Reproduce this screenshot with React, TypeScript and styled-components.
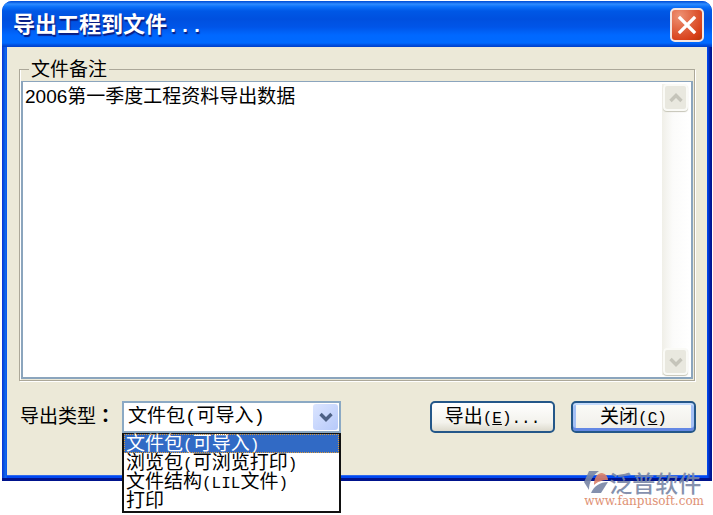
import React, { useState } from "react";
import styled, { createGlobalStyle, css } from "styled-components";

const GlobalStyle = createGlobalStyle`
  *, *::before, *::after { box-sizing: border-box; }
  body { margin: 0; background: #fff; }
  body, button, select, textarea {
    font-family: "Liberation Sans", "Noto Sans CJK SC", sans-serif;
    font-size: 19px;
    color: #000;
  }
`;

const Page = styled.main`
  position: relative;
  display: flex;
  flex-direction: column;
  min-height: 100vh;
  padding: 1px 1px 34px 2px;
`;

const Dialog = styled.section`
  flex: 1;
  display: flex;
  flex-direction: column;
  border-radius: 10px 10px 0 0;
  padding: 0 5px 5px;
  background: linear-gradient(90deg, #0831d9 0, #0855dd 2px, #166aee 4px, #0048f1 5px, #0048f1 calc(100% - 5px), #0040e0 calc(100% - 4px), #001ea0 calc(100% - 2px), #00138c 100%);
  box-shadow: inset 0 -3px 0 #00138c;
`;

const TitleBar = styled.header`
  display: flex;
  align-items: center;
  justify-content: space-between;
  height: 46px;
  margin: 0 -5px;
  padding: 2px 8px 0 11px;
  border-radius: 10px 10px 0 0;
  background: linear-gradient(180deg, #0050d8 0, #0a5ce0 1px, #2f8cff 3px, #0a70f8 6px, #0058e6 10px, #0050df 18px, #0055e8 26px, #0068ff 34px, #006aff 42px, #0050e0 44px, #003fc8 46px);
`;

const Title = styled.h1`
  margin: 0;
  padding-top: 4px;
  font-family: "Liberation Mono", "Noto Sans CJK SC", monospace;
  font-size: 22px;
  line-height: 28px;
  font-weight: 700;
  color: #fff;
  text-shadow: 1px 2px 1px #0a1c80;
`;

const Dots = styled.span`
  font-size: 20px;
`;

const CloseBox = styled.button`
  display: grid;
  place-items: center;
  width: 34px;
  height: 34px;
  padding: 0;
  border: 2px solid #f4e6e2;
  border-radius: 5px;
  background: radial-gradient(circle at 25% 20%, #ee9274 0, #e0603c 45%, #d8401a 75%, #b83408 100%);
`;

const Body = styled.div`
  flex: 1;
  display: flex;
  flex-direction: column;
  padding: 10px 12px 0;
  background: #ece9d8;
  border-bottom: 1px solid #2c68f0;
`;

const Group = styled.fieldset`
  min-width: 0;
  margin: 0;
  padding: 0 1px 1px;
  border: 1px solid #aca899;
  box-shadow: 1px 1px 0 #fff, inset 1px 0 0 #fff;
`;

const Legend = styled.legend`
  margin-left: 8px;
  padding: 2px 2px 0;
  line-height: 22px;
`;

const Memo = styled.div`
  display: flex;
  padding: 2px;
  border: 2px solid #8ba5bd;
  border-top-width: 1px;
  background: #fff;
`;

const MemoText = styled.textarea`
  flex: 1;
  min-width: 0;
  padding: 1px 0 2px;
  border: 0;
  outline: 0;
  resize: none;
  overflow: hidden;
  background: transparent;
  line-height: 24px;
`;

const ScrollTrack = styled.div`
  display: flex;
  flex-direction: column;
  justify-content: space-between;
  width: 27px;
  background: linear-gradient(90deg, #f0efe8, #fbfbfa 40%, #fff);
`;

const ScrollButton = styled.button`
  display: grid;
  place-items: center;
  width: 25px;
  height: 27px;
  margin: 0 1px;
  padding: 0;
  border: 2px solid #fafaf6;
  border-radius: 4px;
  background: #e9e8df;
  box-shadow: 0 1px 1px #c5c4b6;
`;

const Footer = styled.div`
  display: flex;
  align-items: center;
  margin-top: 20px;
`;

const TypeLabel = styled.label`
  width: 103px;
  padding-left: 1px;
  line-height: 24px;
  white-space: nowrap;
`;

const Colon = styled.span`
  font-family: "Noto Sans CJK TC", sans-serif;
  font-weight: 700;
  line-height: 1;
`;

const Combo = styled.div`
  position: relative;
  width: 219px;
`;

const ComboSelect = styled.select`
  display: block;
  width: 100%;
  height: 32px;
  padding: 0 32px 0 4px;
  border: 2px solid #8ba9c4;
  border-radius: 0;
  outline: 0;
  appearance: none;
  background: #fff;
  font-family: "Liberation Mono", "Noto Sans CJK SC", monospace;
`;

const ComboArrow = styled.span`
  position: absolute;
  top: 3px;
  right: 3px;
  display: grid;
  place-items: center;
  width: 25px;
  height: 26px;
  border-radius: 3px;
  background: linear-gradient(135deg, #dbe5ff, #b6c9fa);
  pointer-events: none;
`;

const Menu = styled.ul`
  position: absolute;
  top: 100%;
  left: 0;
  right: 0;
  z-index: 1;
  margin: 0;
  padding: 0 0 1px;
  border: 2px solid #111;
  border-top-width: 1px;
  background: #fff;
  list-style: none;
`;

const MenuItem = styled.li<{ $active: boolean }>`
  height: 19px;
  padding-left: 2px;
  line-height: 20px;
  white-space: nowrap;
  ${({ $active }) =>
    $active &&
    css`
      background: #316ac5;
      color: #fff;
      outline: 1px dotted #d99a3a;
      outline-offset: -1px;
    `}
`;

const Latin = styled.span`
  font-family: "Liberation Mono", monospace;
  font-size: 16px;
  line-height: 1;
`;

const Actions = styled.div`
  display: flex;
  gap: 16px;
  margin-left: auto;
  margin-right: -1px;
`;

const ActionButton = styled.button<{ $primary?: boolean }>`
  width: 125px;
  height: 32px;
  padding: 0;
  border: 2px solid #245789;
  border-radius: 5px;
  line-height: 24px;
  background: linear-gradient(180deg, #fff, #f3f2ec 70%, #dddacd);
  ${({ $primary }) =>
    $primary &&
    css`
      background: linear-gradient(180deg, #fbfbf8, #efeee8);
      box-shadow: inset 0 2px 0 #c4dbfc, inset 0 -3px 0 #6488e4, inset 3px 0 0 #a4c0f5, inset -3px 0 0 #a4c0f5;
    `}
`;

const Brand = styled.a`
  position: absolute;
  right: 9px;
  bottom: 7px;
  display: grid;
  grid-template-columns: 25px auto;
  align-items: center;
  text-decoration: none;
  opacity: 0.9;
`;

const BrandName = styled.span`
  font-family: "Noto Sans CJK SC", sans-serif;
  font-size: 23px;
  line-height: 24px;
  font-weight: 500;
  color: #7886a6;
`;

const BrandUrl = styled.span`
  grid-column: 1 / -1;
  font-family: "DejaVu Serif", serif;
  font-size: 12px;
  line-height: 14px;
  color: #dc8666;
`;

function Chevron({ up, color }: { up?: boolean; color: string }) {
  return (
    <svg width="14" height="10" viewBox="0 0 14 10" aria-hidden="true">
      <path d={up ? "M1.5 8 7 2.5 12.5 8" : "M1.5 2 7 7.5 12.5 2"} fill="none" stroke={color} strokeWidth="3.4" />
    </svg>
  );
}

function MixedText({ text }: { text: string }) {
  return (
    <>
      {text.split(/([ -~]+)/).map((part, i) => (i % 2 ? <Latin key={i}>{part}</Latin> : part))}
    </>
  );
}

const exportTypes = ["文件包(可导入)", "浏览包(可浏览打印)", "文件结构(LIL文件)", "打印"];

export default function App() {
  const [type, setType] = useState(exportTypes[0]);
  const [note, setNote] = useState("2006第一季度工程资料导出数据");

  return (
    <Page>
      <GlobalStyle />
      <Dialog role="dialog" aria-labelledby="dialog-title">
        <TitleBar>
          <Title id="dialog-title">
            导出工程到文件<Dots>...</Dots>
          </Title>
          <CloseBox type="button" aria-label="关闭">
            <svg width="20" height="20" viewBox="0 0 20 20" aria-hidden="true">
              <path d="M3 3 17 17M17 3 3 17" stroke="#fff" strokeWidth="3.2" strokeLinecap="square" />
            </svg>
          </CloseBox>
        </TitleBar>
        <Body>
          <Group>
            <Legend id="note-label">文件备注</Legend>
            <Memo>
              <MemoText
                aria-labelledby="note-label"
                rows={12}
                spellCheck={false}
                value={note}
                onChange={(e) => setNote(e.target.value)}
              />
              <ScrollTrack>
                <ScrollButton type="button" aria-label="向上滚动">
                  <Chevron up color="#c5c4ba" />
                </ScrollButton>
                <ScrollButton type="button" aria-label="向下滚动">
                  <Chevron color="#c5c4ba" />
                </ScrollButton>
              </ScrollTrack>
            </Memo>
          </Group>
          <Footer>
            <TypeLabel htmlFor="export-type">
              导出类型<Colon>：</Colon>
            </TypeLabel>
            <Combo>
              <ComboSelect id="export-type" value={type} onChange={(e) => setType(e.target.value)}>
                {exportTypes.map((t) => (
                  <option key={t}>{t}</option>
                ))}
              </ComboSelect>
              <ComboArrow>
                <Chevron color="#4d6185" />
              </ComboArrow>
              <Menu role="listbox" aria-label="导出类型">
                {exportTypes.map((t) => (
                  <MenuItem key={t} role="option" aria-selected={t === type} $active={t === type} onClick={() => setType(t)}>
                    <MixedText text={t} />
                  </MenuItem>
                ))}
              </Menu>
            </Combo>
            <Actions>
              <ActionButton type="button">
                导出<Latin>(<u>E</u>)...</Latin>
              </ActionButton>
              <ActionButton type="button" $primary>
                关闭<Latin>(<u>C</u>)</Latin>
              </ActionButton>
            </Actions>
          </Footer>
        </Body>
      </Dialog>
      <Brand href="#">
        <svg width="25" height="23" viewBox="0 0 25 23" aria-hidden="true">
          <path d="M5 0H15C9 4 5 11 5 19L0 11Z" fill="#7886a6" />
          <path d="M10 14C10 7 13 2 18 2C22 3 24 6 24 9C18 9 13 11 10 14Z" fill="#dc8068" />
          <path d="M7 22C10 15 16 11 24 11L17 22Z" fill="#7886a6" />
        </svg>
        <BrandName>泛普软件</BrandName>
        <BrandUrl>www.fanpusoft.com</BrandUrl>
      </Brand>
    </Page>
  );
}
